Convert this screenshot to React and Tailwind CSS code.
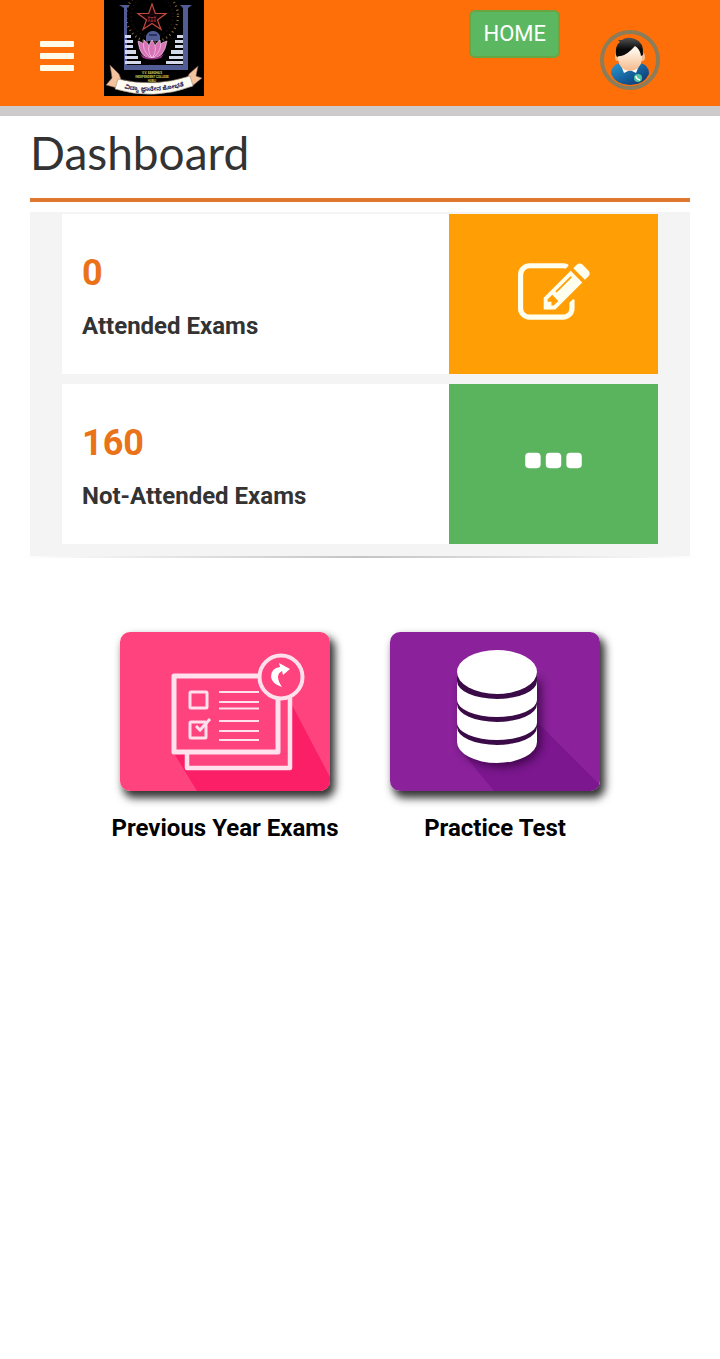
function CollegeLogo() {
  return (
    <svg viewBox="0 0 100 96" className="h-24 w-25" role="img" aria-label="College logo">
      <rect width="100" height="96" fill="#000" />
      <circle cx="48" cy="16" r="26" fill="none" stroke="#8c6a34" strokeWidth="2.4" strokeDasharray="1 3.1" />
      <circle cx="48" cy="16" r="21" fill="none" stroke="#3d2030" strokeWidth="1" strokeDasharray="1 3" />
      <path d="M48 4l3.300 9.500h10.700l-8.500 6.500 3.500 9.500-9-6-9 6 3.500-9.500-8.500-6.500h10.700z" fill="#150306" stroke="#c04a40" strokeWidth="1.200" />
      <path d="M44 17.500h8M44 21h8M45 16v5M48 17v5M51 16v6" fill="none" stroke="#9c2f35" strokeWidth=".8" />
      <g fill="#515d94">
        <path d="M15 5h11l-3 3v57h56V8l-3-3h12l-4 3v62H20V8z" />
        <path d="M42 41v-5q2-5 7-5t7 5v5z" />
      </g>
      <path d="M45 35h8" stroke="#20284e" strokeWidth="1.500" />
      <g fill="#d5d9ea">
        <path d="M21 35h6v3h-6zM21 40h8v3h-8zM21 45h8v3h-8zM21 50h11v4H21zM21 56h13v3H21zM21 61h16v3H21z" />
        <path d="M73 35h6v3h-6zM71 40h8v3h-8zM71 45h8v3h-8zM67 50h12v4H67zM65 56h14v3H65zM62 61h17v3H62z" />
      </g>
      <g fill="#d873b8" stroke="#f7d9ee" strokeWidth=".6">
        <path d="M48 58Q36 59 34 41q9 2 14 17z" />
        <path d="M48 58q12 1 15-17-10 2-15 17z" />
        <path d="M47 58Q37 50 40 40q8 5 7 18z" />
        <path d="M49 58q10-8 7-18-8 5-7 18z" />
        <path d="M48 58q-7-9 0-18 7 9 0 18z" />
      </g>
      <path d="M36 54q12 8 24 0l-3 4q-9 3-18 0z" fill="#9c3583" />
      <g fill="#d8cf5a" fontFamily="Roboto, sans-serif" fontWeight="700" textAnchor="middle">
        <text x="48" y="74" fontSize="3">V.V. SANGHA'S</text>
        <text x="48" y="78" fontSize="3">INDEPENDENT COLLEGE</text>
        <text x="48" y="82" fontSize="3">HUBLI</text>
      </g>
      <path d="M6 65l9 9 3 8-5 6-11-3 6-7zM94 66l-9 8-3 7 5 6 11-9-6-2z" fill="#f3c3a0" stroke="#7d5448" strokeWidth=".6" />
      <path d="M14 79q36 9 72-3l3 10q-39 15-78 3z" fill="#fffdf2" stroke="#9b8a7a" strokeWidth=".6" />
      <path id="mottoLine" d="M13 87q37 9 74-3" fill="none" />
      <text fill="#1e2257" fontSize="6" fontWeight="700" fontFamily="'Noto Sans Kannada', 'Noto Sans', sans-serif">
        <textPath href="#mottoLine" startOffset="50%" textAnchor="middle">ವಿದ್ಯಾ ಜ್ಞಾನೇನ ಶೋಭತೆ</textPath>
      </text>
    </svg>
  );
}

function Avatar() {
  return (
    <svg viewBox="0 0 60 60" className="size-15" aria-hidden="true">
      <defs>
        <linearGradient id="shirt" x1="0" x2="1" y1="0" y2="1">
          <stop offset="0" stopColor="#2f9bd0" />
          <stop offset=".5" stopColor="#17639f" />
          <stop offset="1" stopColor="#0b2f66" />
        </linearGradient>
        <linearGradient id="face" x1="0" x2="0" y1="0" y2="1">
          <stop offset=".3" stopColor="#fff4e6" />
          <stop offset="1" stopColor="#f3b88a" />
        </linearGradient>
        <linearGradient id="hair" x1="0" x2="0" y1="0" y2="1">
          <stop offset="0" stopColor="#555" />
          <stop offset=".6" stopColor="#0a0a0a" />
        </linearGradient>
      </defs>
      <circle cx="30" cy="30" r="28" fill="none" stroke="#8c7d58" strokeWidth="4" />
      <path d="M11 44q0-10 10-11h18q10 1 10 11-5 11-19 11T11 44z" fill="url(#shirt)" />
      <path d="M22 38l2 5 6-3 6 3 2-5-2-3H24z" fill="#fff" />
      <ellipse cx="17.500" cy="27" rx="2.500" ry="4" fill="#f7bd8d" />
      <ellipse cx="42.500" cy="27" rx="2.500" ry="4" fill="#f7bd8d" />
      <path d="M18 20q0-8 12-8t12 8v9q-1 11-12 12-11-1-12-12z" fill="url(#face)" />
      <path d="M16 25q-1-10 4-13l-2-2 4 0q5-4 13-1 9 3 8 16l-2 1q-1-7-6-10-8 9-14 10-3 0-4 1z" fill="url(#hair)" />
      <circle cx="38" cy="48" r="4" fill="#54c4a0" />
      <path d="M36 46q0 3 4 4" fill="none" stroke="#fff" strokeWidth="1.500" />
    </svg>
  );
}

function EditIcon() {
  return (
    <svg viewBox="0 0 1792 1792" className="size-[72px]" fill="#fffff0" aria-hidden="true">
      <path d="M888 1184l116-116-152-152-116 116v56h96v96h56zm440-720q-16-16-33 1l-350 350q-17 17-1 33t33-1l350-350q17-17 1-33zm80 594v190q0 119-84.500 203.500t-203.500 84.500h-832q-119 0-203.500-84.500t-84.500-203.500v-832q0-119 84.500-203.500t203.500-84.500h832q63 0 117 25 15 7 18 23 3 17-9 29l-49 49q-14 14-32 8-23-6-45-6h-832q-66 0-113 47t-47 113v832q0 66 47 113t113 47h832q66 0 113-47t47-113v-126q0-13 9-22l64-64q15-15 35-7t20 29zm-96-738l288 288-672 672h-288v-288zm444 132l-92 92-288-288 92-92q28-28 68-28t68 28l152 152q28 28 28 68t-28 68z" />
    </svg>
  );
}

function EllipsisIcon() {
  return (
    <svg viewBox="0 0 1408 1792" className="h-[72px] w-[57px]" fill="#fff" aria-hidden="true">
      <rect x="0" y="616" width="384" height="384" rx="96" />
      <rect x="512" y="616" width="384" height="384" rx="96" />
      <rect x="1024" y="616" width="384" height="384" rx="96" />
    </svg>
  );
}

function ExamsArt() {
  return (
    <svg viewBox="0 0 210 159" className="block h-auto w-full" aria-hidden="true">
      <rect width="210" height="159" fill="#ff437e" />
      <path d="M52 118l25 41h133v-14l-38-72v58z" fill="#fb1f68" />
      <path d="M54 44h104v22h14v70H67v-16H54z" fill="#ff437e" />
      <g fill="none" stroke="#ffe0ec">
        <path d="M67 121v15h103V66" strokeWidth="4.500" strokeLinejoin="round" />
        <path d="M139 44H54v76h104V66" strokeWidth="5" strokeLinejoin="round" />
        <circle cx="161" cy="45" r="21.500" strokeWidth="4" />
        <rect x="70" y="60" width="17" height="16" strokeWidth="3" rx="1" />
        <rect x="70" y="90" width="16" height="16" strokeWidth="3" rx="1" />
        <path d="M76 94l4 4 10-11" strokeWidth="3" />
        <path d="M99 60h40M99 70h40M99 76.500h40M99 89h40M99 99h40M99 108h40" strokeWidth="2" />
      </g>
      <path d="M162 55q-10-3-11-10 0-9 9-10l-1-4 11 6-7 6-1-4q-8 4 0 16z" fill="#fff" />
    </svg>
  );
}

function DatabaseArt() {
  return (
    <svg viewBox="0 0 210 159" className="block h-auto w-full" aria-hidden="true">
      <defs>
        <filter id="soft" x="-30%" y="-30%" width="170%" height="170%">
          <feGaussianBlur stdDeviation="5" />
        </filter>
      </defs>
      <rect width="210" height="159" fill="#8b229b" />
      <path d="M67 114l37 45h106v-6l-62-62z" fill="#7d1790" />
      <path d="M71 48h80v66q-6 20-40 21-34-2-40-21z" fill="#2c0636" opacity=".75" filter="url(#soft)" />
      <path d="M67 40h80v69q-3 20-40 20t-40-20z" fill="#3a0b47" />
      <g fill="#fff">
        <ellipse cx="107" cy="40" rx="40" ry="22" />
        <path d="M67 49A40 18 0 0 0 147 49V68A40 17 0 0 1 67 68z" />
        <path d="M67 72A40 18 0 0 0 147 72V91A40 17 0 0 1 67 91z" />
        <path d="M67 95A40 18 0 0 0 147 95V110A40 21 0 0 1 67 110z" />
      </g>
    </svg>
  );
}

function StatRow({ value, label, tone, children }) {
  return (
    <div className="flex h-40 bg-white">
      <div className="flex-1 px-5 pt-[37px]">
        <p className="text-4xl leading-[44px] font-bold text-[#ea7218]">{value}</p>
        <p className="mt-[19px] text-2xl leading-6 font-bold text-[#333]">{label}</p>
      </div>
      <div className={`flex w-[35%] items-center justify-center ${tone}`}>{children}</div>
    </div>
  );
}

function Tile({ label, children }) {
  return (
    <a href="#" className="flex w-[270px] flex-col items-center">
      <span className="block w-[210px] overflow-hidden rounded-[10px] shadow-[4px_6px_8px_1px_#333]">{children}</span>
      <span className="mt-[23px] text-2xl leading-7 font-bold text-black">{label}</span>
    </a>
  );
}

export default function App() {
  return (
    <div className="min-h-screen bg-white font-[Roboto,'Liberation_Sans',sans-serif]">
      <header className="flex h-[116px] items-start border-b-10 border-[#cccaca] bg-[#ff6f09] pr-15 pl-10">
        <button type="button" aria-label="Open menu" className="mt-[41px] flex w-[34px] flex-col gap-[6px]">
          <span className="h-[6px] w-full rounded-[1px] bg-[#fffbe9]" />
          <span className="h-[6px] w-full rounded-[1px] bg-[#fffbe9]" />
          <span className="h-[6px] w-full rounded-[1px] bg-[#fffbe9]" />
        </button>
        <a href="#" className="ml-[30px] block">
          <CollegeLogo />
        </a>
        <a
          href="#"
          className="mt-[10px] ml-auto flex h-12 items-center rounded-md border-2 border-[#6aa544] bg-[#5cb860] px-3 text-[22px] leading-8 text-white"
        >
          HOME
        </a>
        <button type="button" aria-label="Account" className="mt-[30px] ml-10">
          <Avatar />
        </button>
      </header>

      <main>
        <section className="px-[30px]">
          <h1 className="border-b-4 border-[#e0782f] pt-[7px] pb-[15px] font-[Lato,'Noto_Sans',sans-serif] text-[46px] leading-15 text-[#333]">
            Dashboard
          </h1>
          <div className="mt-[10px] flex flex-col gap-[10px] bg-[#f4f4f4] px-8 pt-[2px] pb-3">
            <StatRow value="0" label="Attended Exams" tone="bg-[#ff9f05]">
              <EditIcon />
            </StatRow>
            <StatRow value="160" label="Not-Attended Exams" tone="bg-[#59b45d]">
              <EllipsisIcon />
            </StatRow>
          </div>
        </section>
        <div className="mx-[15px] h-[2px] bg-linear-to-r from-transparent via-[#c4c4c4] to-transparent" />
        <nav className="mt-[74px] flex flex-wrap justify-center" aria-label="Exams">
          <Tile label="Previous Year Exams">
            <ExamsArt />
          </Tile>
          <Tile label="Practice Test">
            <DatabaseArt />
          </Tile>
        </nav>
      </main>
    </div>
  );
}
